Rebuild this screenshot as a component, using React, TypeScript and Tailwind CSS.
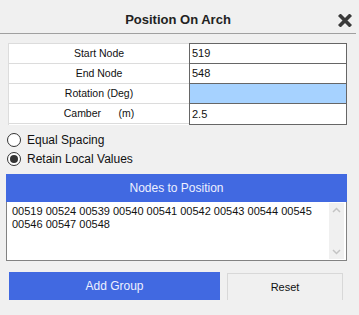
import React from "react";

const labels = ["Start Node", "End Node", "Rotation (Deg)", "Camber      (m)"];
const values = ["519", "548", "", "2.5"];

function Radio({ checked, label }: { checked: boolean; label: string }) {
  return (
    <div className="flex items-center h-[19px] pl-[7px]">
      <span className="w-[14px] h-[14px] rounded-full border border-[#333] bg-white flex items-center justify-center">
        {checked && <span className="w-[8px] h-[8px] rounded-full bg-[#333]" />}
      </span>
      <span className="ml-[6px] text-[12px] text-[#111]">{label}</span>
    </div>
  );
}

export default function App() {
  return (
    <div
      className="w-[359px] h-[315px] bg-[#f0f0f0] overflow-hidden text-black"
      style={{ fontFamily: '"Liberation Sans", Arial, sans-serif' }}
    >
      <div className="relative h-[34px] flex items-center justify-center border-b border-[#a0a0a0] mr-[3px]">
        <span className="text-[13px] font-bold text-[#222] mt-[6px]">Position On Arch</span>
        <svg className="absolute right-[4px] top-[14px]" width="14" height="13" viewBox="0 0 14 13">
          <path d="M2.5 2 L11.5 11 M11.5 2 L2.5 11" stroke="#3a3a3a" strokeWidth="3.6" strokeLinecap="square" />
        </svg>
      </div>

      <div className="flex ml-[8px] mt-[9px]">
        <div className="w-[181px] border-t border-l border-[#dcdcdc] bg-white">
          {labels.map((l, i) => (
            <div
              key={i}
              className="h-[20px] border-b border-[#dcdcdc] flex items-center justify-center text-[10.5px] text-[#111] whitespace-pre overflow-hidden"
            >
              <span className="leading-[13px]">{l}</span>
            </div>
          ))}
        </div>
        <div className="w-[158px] border border-[#666] bg-white">
          {values.map((v, i) => (
            <div
              key={i}
              className={`h-[20px] flex items-center pl-[2px] text-[11px] text-[#111] ${i < 3 ? "border-b border-[#666]" : "h-[19px]"} ${i === 2 ? "bg-[#a6d2ff]" : ""}`}
            >
              {v}
            </div>
          ))}
        </div>
      </div>

      <div className="mt-[5px] flex flex-col">
        <Radio checked={false} label="Equal Spacing" />
        <Radio checked={true} label="Retain Local Values" />
      </div>

      <div className="ml-[6px] mt-[6px] w-[341px]">
        <div className="h-[28px] bg-[#4169e1] flex items-center justify-center text-[12px] text-[#eef0ff]">
          Nodes to Position
        </div>
        <div className="h-[59px] bg-white border border-t-0 border-[#828282] flex">
          <div className="flex-1 pl-[5px] pt-[3px] text-[11px] leading-[13px] text-[#111]">
            00519 00524 00539 00540 00541 00542 00543 00544 00545 00546 00547 00548
          </div>
          <div className="w-[15px] mr-[2px] mt-[1px] mb-[1px] bg-[#f0f0f0] flex flex-col items-center justify-between py-[4px]">
            <svg width="9" height="6" viewBox="0 0 9 6">
              <path d="M1 5 L4.5 1.5 L8 5" stroke="#c4c4c4" strokeWidth="1.5" fill="none" />
            </svg>
            <svg width="9" height="6" viewBox="0 0 9 6">
              <path d="M1 1 L4.5 4.5 L8 1" stroke="#c4c4c4" strokeWidth="1.5" fill="none" />
            </svg>
          </div>
        </div>
      </div>

      <div className="flex mt-[11px] ml-[9px] items-start">
        <div className="w-[211px] h-[28px] bg-[#4169e1] flex items-center justify-center text-[12px] text-[#eef0ff]">
          Add Group
        </div>
        <div className="ml-[7px] mt-[1px] w-[116px] h-[27px] border border-b-0 border-[#d8d8d8] flex items-center justify-center text-[11px] text-[#111]">
          Reset
        </div>
      </div>
    </div>
  );
}
